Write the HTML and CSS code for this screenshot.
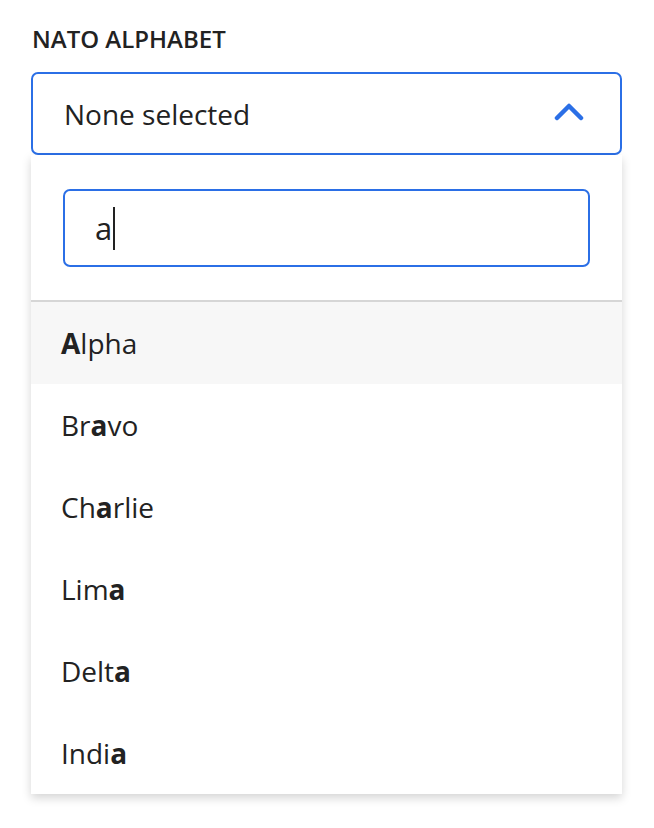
FILE: index.html
```html
<!DOCTYPE html>
<html lang="en">
<head>
<meta charset="utf-8">
<title>NATO alphabet</title>
<link rel="stylesheet" href="styles.css">
</head>
<body>
<div class="field">
  <div class="label">NATO ALPHABET</div>
  <div class="select">
    <span class="select-value">None selected</span>
    <svg class="chevron" width="30" height="20" viewBox="0 0 30 20" aria-hidden="true">
      <path d="M3 16 L15 4 L27 16" fill="none" stroke="#2b6fe6" stroke-width="4.5" stroke-linecap="round" stroke-linejoin="round"/>
    </svg>
  </div>
  <div class="panel">
    <div class="search-area">
      <div class="search"><span class="search-text">a</span><span class="caret"></span></div>
    </div>
    <ul class="options">
      <li class="option active"><b>A</b>lpha</li>
      <li class="option">Br<b>a</b>vo</li>
      <li class="option">Ch<b>a</b>rlie</li>
      <li class="option">Lim<b>a</b></li>
      <li class="option">Delt<b>a</b></li>
      <li class="option">Indi<b>a</b></li>
    </ul>
  </div>
</div>
</body>
</html>
```

FILE: styles.css
```css
html, body {
  margin: 0;
  padding: 0;
  background: #ffffff;
}
body {
  font-family: "Open Sans", "Noto Sans", sans-serif;
  color: #222222;
  min-height: 828px;
}
.field {
  width: 591px;
  margin-left: 31px;
  padding-top: 23px;
  padding-bottom: 34px;
}
.label {
  font-size: 24px;
  font-weight: 600;
  line-height: 32px;
  color: #222222;
  margin-bottom: 17px;
  padding-left: 1px;
}
.select {
  box-sizing: border-box;
  height: 83px;
  border: 2px solid #2b6fe6;
  border-radius: 7px;
  display: flex;
  align-items: center;
  justify-content: space-between;
  padding: 0 36px 0 31px;
}
.select-value {
  font-size: 28px;
  line-height: 36px;
}
.chevron {
  display: block;
  margin-top: -4px;
}
.panel {
  background: #ffffff;
  box-shadow: 0 4px 9px rgba(0, 0, 0, 0.17);
}
.search-area {
  padding: 34px 32px 33px;
  border-bottom: 2px solid #d6d6d6;
}
.search {
  box-sizing: border-box;
  height: 78px;
  border: 2px solid #2b6fe6;
  border-radius: 7px;
  display: flex;
  align-items: center;
  padding-left: 30px;
}
.search-text {
  font-size: 31px;
  line-height: 40px;
}
.caret {
  display: block;
  width: 2px;
  height: 43px;
  background: #222222;
  margin-left: 1px;
}
.options {
  list-style: none;
  margin: 0;
  padding: 0;
}
.option {
  height: 82px;
  display: flex;
  align-items: center;
  padding-left: 30px;
  font-size: 28px;
  line-height: 36px;
}
.option b {
  font-weight: 700;
}
.option.active {
  background: #f7f7f7;
}
```
